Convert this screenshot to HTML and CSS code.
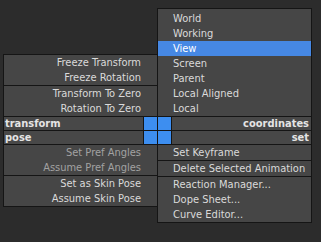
FILE: index.html
```html
<!DOCTYPE html>
<html lang="en">
<head>
  <meta charset="UTF-8">
  <title>Marking Menu</title>
  <link rel="stylesheet" href="styles.css">
</head>
<body>
  <div class="hotbox">
    <div class="menu menu-left menu-top">
      <div class="item">Freeze Transform</div>
      <div class="item">Freeze Rotation</div>
      <div class="sep"></div>
      <div class="item">Transform To Zero</div>
      <div class="item">Rotation To Zero</div>
    </div>
    <div class="menu menu-right menu-coords">
      <div class="item">World</div>
      <div class="item">Working</div>
      <div class="item active">View</div>
      <div class="item">Screen</div>
      <div class="item">Parent</div>
      <div class="item">Local Aligned</div>
      <div class="item">Local</div>
    </div>

    <div class="strip">
      <div class="tab">transform</div>
      <div class="square"></div>
      <div class="square"></div>
      <div class="tab tab-right">coordinates</div>
      <div class="tab">pose</div>
      <div class="square"></div>
      <div class="square"></div>
      <div class="tab tab-right">set</div>
    </div>

    <div class="menu menu-left menu-bottom">
      <div class="item dim">Set Pref Angles</div>
      <div class="item dim">Assume Pref Angles</div>
      <div class="sep"></div>
      <div class="item">Set as Skin Pose</div>
      <div class="item">Assume Skin Pose</div>
    </div>
    <div class="menu menu-right">
      <div class="item">Set Keyframe</div>
      <div class="sep"></div>
      <div class="item">Delete Selected Animation</div>
      <div class="sep"></div>
      <div class="item">Reaction Manager...</div>
      <div class="item">Dope Sheet...</div>
      <div class="item">Curve Editor...</div>
    </div>
  </div>
</body>
</html>
```

FILE: styles.css
```css
body {
  margin: 0;
  background-color: #2c2c2c;
  font-family: "DejaVu Sans Condensed", "DejaVu Sans", sans-serif;
  font-size: 11px;
  color: #dadada;
}
.hotbox {
  display: grid;
  grid-template-columns: 154px 155px;
  margin: 8px 0 0 3px;
  width: 309px;
}
.menu {
  background-color: #464646;
  border: 1px solid #151515;
}
.menu-left {
  border-right: none;
  text-align: right;
}
.menu-top {
  align-self: end;
  border-bottom: none;
}
.menu-bottom {
  align-self: start;
}
.menu-right {
  text-align: left;
}
.menu-coords {
  padding-top: 2px;
  border-bottom: none;
}
.menu-left + .menu-right {
  border-top-width: 1px;
}
.menu-right.menu-coords + .strip + .menu-left,
.strip + .menu-left + .menu-right {
  border-top: 1px solid #151515;
}
.item {
  height: 15px;
  line-height: 15px;
  white-space: nowrap;
}
.menu-left .item {
  padding-right: 16px;
}
.menu-right .item {
  padding-left: 15px;
}
.item.active {
  background-color: #4688e4;
  color: #ffffff;
}
.item.dim {
  color: #a2a2a2;
}
.sep {
  height: 1px;
  background-color: #151515;
}
.strip {
  grid-column: 1 / 3;
  display: grid;
  grid-template-columns: 139px 13px 13px 139px;
  grid-template-rows: 13px 13px;
  column-gap: 1px;
  row-gap: 1px;
  background-color: #151515;
  border: 1px solid #151515;
  border-bottom: none;
}
.tab {
  background-color: #484848;
  font-weight: bold;
  color: #e4e4e4;
  line-height: 13px;
  padding-left: 1px;
}
.tab-right {
  text-align: right;
  padding: 0 2px 0 0;
}
.square {
  background-color: #3d8ef0;
}
```
